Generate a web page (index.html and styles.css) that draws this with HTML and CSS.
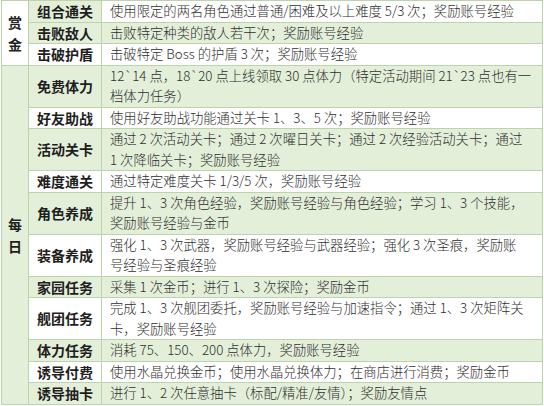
FILE: index.html
```html
<!DOCTYPE html>
<html lang="zh">
<head>
<meta charset="utf-8">
<link rel="stylesheet" href="styles.css">
</head>
<body>
<div class="wrap">
<table class="tasks">
  <colgroup><col class="c1"><col class="c2"><col class="c3"></colgroup>
  <tbody>
    <tr>
      <td class="cat w" rowspan="3">赏<br>金</td>
      <td class="name g">组合通关</td>
      <td class="desc w">使用限定的两名角色通过普通/困难及以上难度 5/3 次；奖励账号经验</td>
    </tr>
    <tr>
      <td class="name g">击败敌人</td>
      <td class="desc g">击败特定种类的敌人若干次；奖励账号经验</td>
    </tr>
    <tr>
      <td class="name w">击破护盾</td>
      <td class="desc w">击破特定 Boss 的护盾 3 次；奖励账号经验</td>
    </tr>
    <tr class="dbl">
      <td class="cat g" rowspan="11">每<br>日</td>
      <td class="name g">免费体力</td>
      <td class="desc g">12`14 点，18`20 点上线领取 30 点体力（特定活动期间 21`23 点也有一<br>档体力任务）</td>
    </tr>
    <tr>
      <td class="name w">好友助战</td>
      <td class="desc w">使用好友助战功能通过关卡 1、3、5 次；奖励账号经验</td>
    </tr>
    <tr class="dbl">
      <td class="name g">活动关卡</td>
      <td class="desc g">通过 2 次活动关卡；通过 2 次曜日关卡；通过 2 次经验活动关卡；通过<br>1 次降临关卡；奖励账号经验</td>
    </tr>
    <tr>
      <td class="name w">难度通关</td>
      <td class="desc w">通过特定难度关卡 1/3/5 次，奖励账号经验</td>
    </tr>
    <tr class="dbl">
      <td class="name g">角色养成</td>
      <td class="desc g">提升 1、3 次角色经验，奖励账号经验与角色经验；学习 1、3 个技能，<br>奖励账号经验与金币</td>
    </tr>
    <tr class="dbl">
      <td class="name w">装备养成</td>
      <td class="desc w">强化 1、3 次武器，奖励账号经验与武器经验；强化 3 次圣痕，奖励账<br>号经验与圣痕经验</td>
    </tr>
    <tr>
      <td class="name g">家园任务</td>
      <td class="desc g">采集 1 次金币；进行 1、3 次探险；奖励金币</td>
    </tr>
    <tr class="dbl">
      <td class="name w">舰团任务</td>
      <td class="desc w">完成 1、3 次舰团委托，奖励账号经验与加速指令；通过 1、3 次矩阵关<br>卡，奖励账号经验</td>
    </tr>
    <tr>
      <td class="name g">体力任务</td>
      <td class="desc g">消耗 75、150、200 点体力，奖励账号经验</td>
    </tr>
    <tr>
      <td class="name w">诱导付费</td>
      <td class="desc w">使用水晶兑换金币；使用水晶兑换体力；在商店进行消费；奖励金币</td>
    </tr>
    <tr>
      <td class="name g">诱导抽卡</td>
      <td class="desc g">进行 1、2 次任意抽卡（标配/精准/友情）；奖励友情点</td>
    </tr>
  </tbody>
</table>
</div>
</body>
</html>
```

FILE: styles.css
```css
html, body {
  margin: 0;
  padding: 0;
  background: #ffffff;
}

.wrap {
  padding: 0 0 0 1px;
}

.tasks {
  border-collapse: collapse;
  table-layout: fixed;
  width: 541px;
  font-family: "Noto Sans CJK SC", "Noto Sans", sans-serif;
  font-size: 14px;
}

.c1 { width: 27px; }
.c2 { width: 73px; }
.c3 { width: 441px; }

.tasks td {
  border: 1px solid #bcd3ac;
  padding: 0;
  vertical-align: middle;
  line-height: 20.5px;
  height: 20.5px;
}

.tasks tr.dbl td {
  height: 41px;
}

.g { background: #e3efd9; }
.w { background: #ffffff; }

.cat {
  text-align: center;
  font-weight: 700;
  color: #1e1e1e;
  line-height: 22px !important;
}

.name {
  text-align: center;
  font-weight: 700;
  color: #1e1e1e;
  white-space: nowrap;
}

.desc {
  padding: 0 2px 0 8px !important;
  font-size: 13.33px;
  font-weight: 300;
  color: #2e2e2e;
  white-space: nowrap;
  overflow: hidden;
}
```
